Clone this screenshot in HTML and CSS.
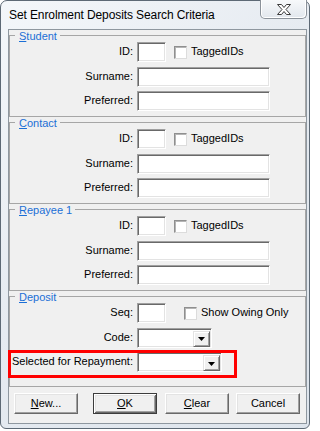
FILE: index.html
```html
<!DOCTYPE html>
<html>
<head>
<meta charset="utf-8">
<link rel="stylesheet" href="styles.css">
</head>
<body>
<div class="window">
  <div class="titlebar">
    <span class="title">Set Enrolment Deposits Search Criteria</span>
    <div class="close">
      <svg width="14" height="11" viewBox="0 0 14 11"><polygon points="0.5,0.5 4.5,0.5 7,3.5 9.5,0.5 13.5,0.5 9,5.5 13.5,10.5 9.5,10.5 7,7.5 4.5,10.5 0.5,10.5 5,5.5" fill="#fff" stroke="#3a3a3a" stroke-width="1" stroke-linejoin="miter"/></svg>
    </div>
  </div>
  <div class="frame">
    <div class="client">
      <div class="group">
        <span class="legend"><u>S</u>tudent</span>
        <div class="rows">
          <span class="lbl">ID:</span>
          <div class="line"><span class="edit id"></span><span class="check"></span><span class="cklbl">TaggedIDs</span></div>
          <span class="lbl">Surname:</span>
          <div class="line"><span class="edit wide"></span></div>
          <span class="lbl">Preferred:</span>
          <div class="line"><span class="edit wide"></span></div>
        </div>
      </div>
      <div class="group">
        <span class="legend"><u>C</u>ontact</span>
        <div class="rows">
          <span class="lbl">ID:</span>
          <div class="line"><span class="edit id"></span><span class="check"></span><span class="cklbl">TaggedIDs</span></div>
          <span class="lbl">Surname:</span>
          <div class="line"><span class="edit wide"></span></div>
          <span class="lbl">Preferred:</span>
          <div class="line"><span class="edit wide"></span></div>
        </div>
      </div>
      <div class="group">
        <span class="legend"><u>R</u>epayee 1</span>
        <div class="rows">
          <span class="lbl">ID:</span>
          <div class="line"><span class="edit id"></span><span class="check"></span><span class="cklbl">TaggedIDs</span></div>
          <span class="lbl">Surname:</span>
          <div class="line"><span class="edit wide"></span></div>
          <span class="lbl">Preferred:</span>
          <div class="line"><span class="edit wide"></span></div>
        </div>
      </div>
      <div class="group deposit">
        <span class="legend"><u>D</u>eposit</span>
        <div class="rows">
          <span class="lbl">Seq:</span>
          <div class="line"><span class="edit id"></span><span class="check far"></span><span class="cklbl">Show Owing Only</span></div>
          <span class="lbl">Code:</span>
          <div class="line"><span class="combo code"><span class="drop"><svg width="7" height="4" viewBox="0 0 7 4"><polygon points="0,0 7,0 3.5,4" fill="#000"/></svg></span></span></div>
          <span class="lbl">Selected for Repayment:</span>
          <div class="line"><span class="combo sel"><span class="drop"><svg width="7" height="4" viewBox="0 0 7 4"><polygon points="0,0 7,0 3.5,4" fill="#000"/></svg></span></span></div>
        </div>
      </div>
      <div class="buttons">
        <span class="btn new"><u>N</u>ew...</span>
        <span class="btn ok default"><u>O</u>K</span>
        <span class="btn clear"><u>C</u>lear</span>
        <span class="btn cancel">Cancel</span>
      </div>
    </div>
  </div>
  <div class="highlight"></div>
</div>
</body>
</html>
```

FILE: styles.css
```css
* { box-sizing: border-box; }
html, body { margin: 0; padding: 0; }
body {
  background: #ffffff;
  width: 313px;
  height: 431px;
  overflow: hidden;
  font-family: "Liberation Sans", Arial, sans-serif;
  font-size: 11px;
  color: #000;
}
.window {
  position: relative;
  width: 310px;
  height: 429px;
  border: 1px solid #5d6975;
  border-radius: 7px 7px 6px 6px;
  background: linear-gradient(135deg, #f4f7fa 0%, #e6ebf1 45%, #dde4ec 100%);
  display: flex;
  flex-direction: column;
}
.titlebar {
  height: 28px;
  display: flex;
  justify-content: space-between;
  align-items: flex-start;
  padding-left: 8px;
}
.title {
  font-size: 12px;
  line-height: 14px;
  padding-top: 7px;
  color: #000;
  letter-spacing: -0.1px;
}
.close {
  width: 47px;
  height: 19px;
  margin-top: -1px;
  margin-right: 2px;
  border: 1px solid #8b929a;
  border-top: none;
  border-radius: 0 0 5px 5px;
  background: linear-gradient(#f7f9fb, #e2e7ed);
  box-shadow: inset 1px 0 #fff, inset -1px -1px #fff;
  display: flex;
  align-items: center;
  justify-content: center;
  padding-top: 1px;
}
.close svg { display: block; }
.frame {
  padding: 0 2px 4px 7px;
}
.client {
  border: 1px solid #8e979f;
  background: #f0f0f0;
  padding: 5px 0 9px 0;
  height: 395px;
}
.group {
  position: relative;
  border: 1px solid #a6a6a6;
  padding: 6px 0 5px 0;
  margin-bottom: 5px;
}
.group.deposit {
  padding-bottom: 14px;
  margin-bottom: 6px;
}
.legend {
  position: absolute;
  top: -6px;
  left: 5px;
  padding: 0 3px 0 4px;
  background: #f0f0f0;
  color: #1b6fd6;
  line-height: 13px;
}
.legend u { text-decoration-color: #1b6fd6; }
.rows {
  display: grid;
  grid-template-columns: 123px auto;
  column-gap: 4px;
  row-gap: 4.5px;
}
.lbl {
  text-align: right;
  line-height: 18px;
  height: 20px;
  white-space: nowrap;
}
.line {
  display: flex;
  align-items: center;
  height: 20px;
}
.edit {
  display: block;
  height: 20px;
  background: #fff;
  border: 1px solid;
  border-color: #a0a0a0 #ffffff #ffffff #a0a0a0;
  box-shadow: inset 1px 1px #696969, inset -1px -1px #e3e3e3;
}
.edit.id { width: 29px; }
.edit.wide { width: 133px; }
.check {
  display: block;
  width: 13px;
  height: 13px;
  margin-left: 8px;
  background: #fff;
  border: 1px solid;
  border-color: #8f8f8f #dcdcdc #dcdcdc #8f8f8f;
  box-shadow: inset 1px 1px #b5b5b5;
}
.check.far { margin-left: 18px; }
.cklbl {
  margin-left: 4px;
  line-height: 18px;
  padding-bottom: 2px;
  white-space: nowrap;
}
.combo {
  display: flex;
  justify-content: flex-end;
  height: 20px;
  background: #fff;
  border: 1px solid;
  border-color: #a0a0a0 #ffffff #ffffff #a0a0a0;
  box-shadow: inset 1px 1px #696969, inset -1px -1px #e3e3e3;
  padding: 1px;
}
.combo.code { width: 75px; }
.combo.sel { width: 85px; }
.drop {
  width: 17px;
  height: 16px;
  margin: 1px 0 0 0;
  background: #f0f0f0;
  border: 1px solid;
  border-color: #e3e3e3 #696969 #696969 #e3e3e3;
  box-shadow: inset 1px 1px #fff, inset -1px -1px #a0a0a0;
  display: flex;
  align-items: center;
  justify-content: center;
  padding-top: 1px;
}
.drop svg { display: block; }
.buttons {
  display: flex;
  height: 21px;
}
.btn {
  display: block;
  width: 64px;
  height: 21px;
  line-height: 19px;
  text-align: center;
  background: #f0f0f0;
  border: 1px solid;
  border-color: #ffffff #696969 #696969 #ffffff;
  box-shadow: inset -1px -1px #a0a0a0, inset 1px 1px #e3e3e3;
}
.btn.new { margin-left: 5px; }
.btn.ok { margin-left: 15px; }
.btn.clear { margin-left: 8px; }
.btn.cancel { margin-left: 7px; }
.btn.default {
  border: 1px solid #3c3c3c;
  box-shadow: inset 1px 1px #fff, inset -1px -1px #696969, inset 2px 2px #e3e3e3, inset -2px -2px #a0a0a0;
}
.highlight {
  position: absolute;
  left: 7px;
  top: 349px;
  width: 229px;
  height: 28px;
  border: 3px solid #ff0000;
}
```
